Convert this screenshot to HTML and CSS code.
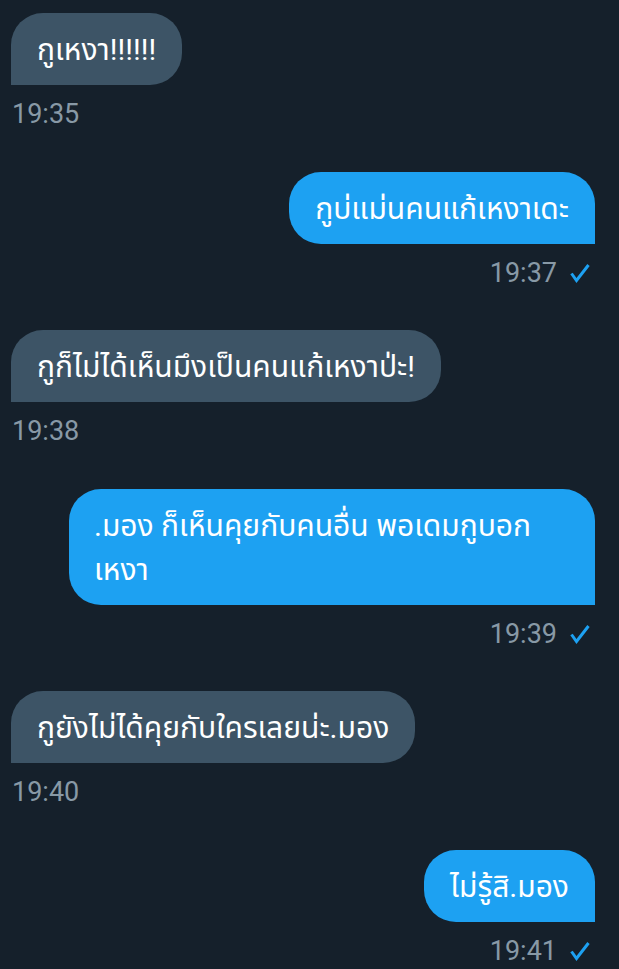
FILE: index.html
```html
<!DOCTYPE html>
<html lang="th">

<head>
    <meta charset="UTF-8">
    <meta name="viewport" content="width=device-width, initial-scale=1.0">
    <title>Messages</title>
    <link rel="stylesheet" href="styles.css">
</head>

<body>
    <div class="chat">
        <div class="msg in">
            <div class="bubble">กูเหงา!!!!!!</div>
            <div class="time">19:35</div>
        </div>
        <div class="msg out">
            <div class="bubble">กูบ่แม่นคนแก้เหงาเดะ</div>
            <div class="time">19:37 <svg class="check" viewBox="0 0 20 20"><path d="M1.5 10.5 L6.5 17.5 L18.5 2"/></svg></div>
        </div>
        <div class="msg in">
            <div class="bubble">กูก็ไม่ได้เห็นมึงเป็นคนแก้เหงาป่ะ!</div>
            <div class="time">19:38</div>
        </div>
        <div class="msg out">
            <div class="bubble wide">.มอง ก็เห็นคุยกับคนอื่น พอเดมกูบอก<br>เหงา</div>
            <div class="time">19:39 <svg class="check" viewBox="0 0 20 20"><path d="M1.5 10.5 L6.5 17.5 L18.5 2"/></svg></div>
        </div>
        <div class="msg in">
            <div class="bubble">กูยังไม่ได้คุยกับใครเลยน่ะ.มอง</div>
            <div class="time">19:40</div>
        </div>
        <div class="msg out">
            <div class="bubble">ไม่รู้สิ.มอง</div>
            <div class="time">19:41 <svg class="check" viewBox="0 0 20 20"><path d="M1.5 10.5 L6.5 17.5 L18.5 2"/></svg></div>
        </div>
    </div>
</body>

</html>
```

FILE: styles.css
```css
body {
    font-family: Roboto, "Noto Sans Thai", "Noto Sans", sans-serif;
    background-color: #15202b;
    margin: 0;
    padding: 0;
}

.chat {
    display: flex;
    flex-direction: column;
    padding: 13px 24px 0 11px;
}

.msg {
    display: flex;
    flex-direction: column;
    align-items: flex-start;
}

.msg.out {
    align-items: flex-end;
}

.bubble {
    font-size: 30px;
    line-height: 44px;
    color: #fff;
    padding: 15px 26px 13px;
    border-radius: 32px;
    background-color: #3d5466;
}

.msg.in .bubble {
    border-bottom-left-radius: 0;
}

.msg.out .bubble {
    background-color: #1da1f2;
    border-bottom-right-radius: 0;
}

.bubble.wide {
    width: 526px;
    box-sizing: border-box;
    padding-left: 25px;
}

.time {
    display: flex;
    align-items: center;
    gap: 13px;
    height: 30px;
    margin: 14px 0 42.5px 1px;
    font-size: 27px;
    line-height: 30px;
    color: #8899a6;
}

.msg.out .time {
    margin-right: 5px;
}

.check {
    width: 20px;
    height: 20px;
    fill: none;
    stroke: #1da1f2;
    stroke-width: 3;
}
```
